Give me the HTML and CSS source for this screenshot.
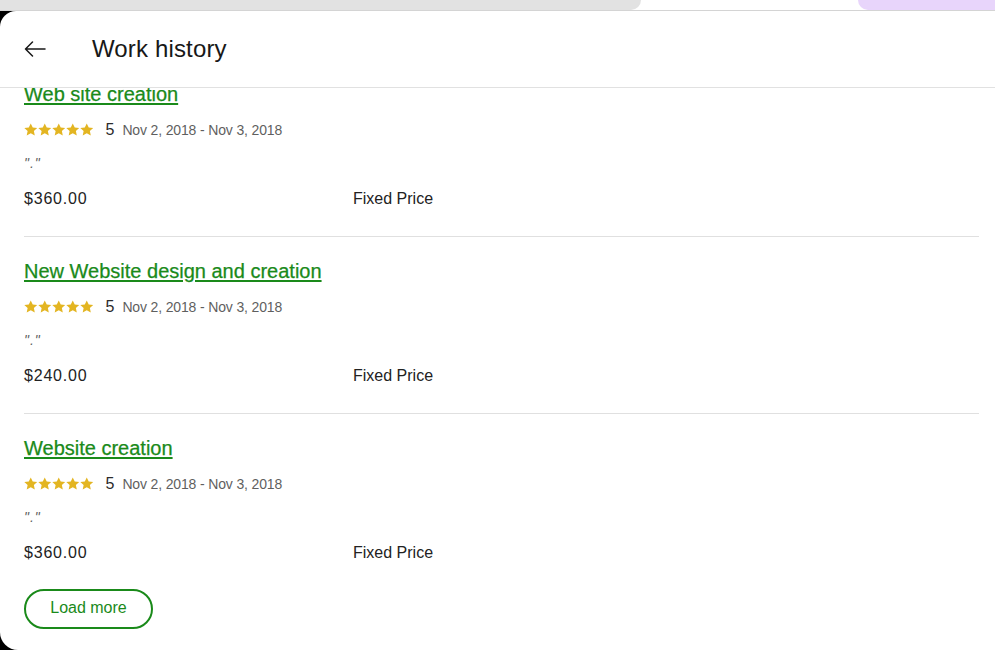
FILE: index.html
```html
<!DOCTYPE html>
<html lang="en">
<head>
<meta charset="utf-8">
<title>Work history</title>
<link rel="stylesheet" href="styles.css">
</head>
<body>
<div class="topbar">
  <div class="pill-grey"></div>
  <div class="pill-lavender"></div>
</div>
<div class="card">
  <header class="header">
    <button class="back" aria-label="Back">
      <svg width="22" height="16" viewBox="0 0 22 16"><path d="M21 8H1.5M8.5 1L1.5 8l7 7" fill="none" stroke="#181818" stroke-width="1.5" stroke-linecap="round" stroke-linejoin="round"/></svg>
    </button>
    <h1 class="title">Work history</h1>
  </header>
  <main class="content">
    <div class="list">
      <section class="item">
        <a class="job" href="#">Web site creation</a>
        <div class="meta">
          <span class="stars"><svg viewBox="0 0 13 13"><path d="M6.5.4l1.9 3.9 4.3.5-3.2 2.9.9 4.3-3.9-2.2-3.9 2.2.9-4.3L.3 4.8l4.3-.5z"/></svg><svg viewBox="0 0 13 13"><path d="M6.5.4l1.9 3.9 4.3.5-3.2 2.9.9 4.3-3.9-2.2-3.9 2.2.9-4.3L.3 4.8l4.3-.5z"/></svg><svg viewBox="0 0 13 13"><path d="M6.5.4l1.9 3.9 4.3.5-3.2 2.9.9 4.3-3.9-2.2-3.9 2.2.9-4.3L.3 4.8l4.3-.5z"/></svg><svg viewBox="0 0 13 13"><path d="M6.5.4l1.9 3.9 4.3.5-3.2 2.9.9 4.3-3.9-2.2-3.9 2.2.9-4.3L.3 4.8l4.3-.5z"/></svg><svg viewBox="0 0 13 13"><path d="M6.5.4l1.9 3.9 4.3.5-3.2 2.9.9 4.3-3.9-2.2-3.9 2.2.9-4.3L.3 4.8l4.3-.5z"/></svg></span>
          <span class="score">5</span>
          <span class="dates">Nov 2, 2018 - Nov 3, 2018</span>
        </div>
        <p class="quote">"."</p>
        <div class="row">
          <span class="price">$360.00</span>
          <span class="type">Fixed Price</span>
        </div>
      </section>
      <section class="item">
        <a class="job" href="#">New Website design and creation</a>
        <div class="meta">
          <span class="stars"><svg viewBox="0 0 13 13"><path d="M6.5.4l1.9 3.9 4.3.5-3.2 2.9.9 4.3-3.9-2.2-3.9 2.2.9-4.3L.3 4.8l4.3-.5z"/></svg><svg viewBox="0 0 13 13"><path d="M6.5.4l1.9 3.9 4.3.5-3.2 2.9.9 4.3-3.9-2.2-3.9 2.2.9-4.3L.3 4.8l4.3-.5z"/></svg><svg viewBox="0 0 13 13"><path d="M6.5.4l1.9 3.9 4.3.5-3.2 2.9.9 4.3-3.9-2.2-3.9 2.2.9-4.3L.3 4.8l4.3-.5z"/></svg><svg viewBox="0 0 13 13"><path d="M6.5.4l1.9 3.9 4.3.5-3.2 2.9.9 4.3-3.9-2.2-3.9 2.2.9-4.3L.3 4.8l4.3-.5z"/></svg><svg viewBox="0 0 13 13"><path d="M6.5.4l1.9 3.9 4.3.5-3.2 2.9.9 4.3-3.9-2.2-3.9 2.2.9-4.3L.3 4.8l4.3-.5z"/></svg></span>
          <span class="score">5</span>
          <span class="dates">Nov 2, 2018 - Nov 3, 2018</span>
        </div>
        <p class="quote">"."</p>
        <div class="row">
          <span class="price">$240.00</span>
          <span class="type">Fixed Price</span>
        </div>
      </section>
      <section class="item last">
        <a class="job" href="#">Website creation</a>
        <div class="meta">
          <span class="stars"><svg viewBox="0 0 13 13"><path d="M6.5.4l1.9 3.9 4.3.5-3.2 2.9.9 4.3-3.9-2.2-3.9 2.2.9-4.3L.3 4.8l4.3-.5z"/></svg><svg viewBox="0 0 13 13"><path d="M6.5.4l1.9 3.9 4.3.5-3.2 2.9.9 4.3-3.9-2.2-3.9 2.2.9-4.3L.3 4.8l4.3-.5z"/></svg><svg viewBox="0 0 13 13"><path d="M6.5.4l1.9 3.9 4.3.5-3.2 2.9.9 4.3-3.9-2.2-3.9 2.2.9-4.3L.3 4.8l4.3-.5z"/></svg><svg viewBox="0 0 13 13"><path d="M6.5.4l1.9 3.9 4.3.5-3.2 2.9.9 4.3-3.9-2.2-3.9 2.2.9-4.3L.3 4.8l4.3-.5z"/></svg><svg viewBox="0 0 13 13"><path d="M6.5.4l1.9 3.9 4.3.5-3.2 2.9.9 4.3-3.9-2.2-3.9 2.2.9-4.3L.3 4.8l4.3-.5z"/></svg></span>
          <span class="score">5</span>
          <span class="dates">Nov 2, 2018 - Nov 3, 2018</span>
        </div>
        <p class="quote">"."</p>
        <div class="row">
          <span class="price">$360.00</span>
          <span class="type">Fixed Price</span>
        </div>
      </section>
      <button class="load-more">Load more</button>
    </div>
  </main>
</div>
</body>
</html>
```
FILE: styles.css
```css
* { box-sizing: border-box; }

html, body {
  margin: 0;
  padding: 0;
  background: #000;
  font-family: "Liberation Sans", Arial, sans-serif;
  color: #181818;
  overflow: hidden;
}

.topbar {
  height: 11px;
  background: #fff;
  border-bottom: 1px solid #d4d4d4;
  display: flex;
  align-items: stretch;
}

.pill-grey {
  width: 641px;
  background: #e2e2e2;
  border-radius: 0 0 14px 0;
}

.pill-lavender {
  margin-left: auto;
  width: 137px;
  background: #e8d5fb;
  border-radius: 0 0 0 14px;
}

.card {
  background: #fff;
  height: 639px;
  border-radius: 16px 0 0 18px;
  display: flex;
  flex-direction: column;
  overflow: hidden;
}

.header {
  flex: none;
  height: 77px;
  border-bottom: 1px solid #e1e1e1;
  display: flex;
  align-items: center;
  padding-left: 24px;
  padding-bottom: 1px;
}

.back {
  border: 0;
  background: none;
  padding: 0;
  width: 22px;
  height: 16px;
  display: flex;
  margin-right: 46px;
}

.title {
  margin: 0;
  font-size: 24px;
  font-weight: 400;
  letter-spacing: 0.15px;
  color: #181818;
}

.content {
  flex: 1;
  overflow: hidden;
  padding: 0 16px 0 24px;
}

.list {
  margin-top: -28px;
}

.item {
  padding: 20px 0 25px;
  border-bottom: 1px solid #e0e0e0;
}

.item.last {
  border-bottom: 0;
  padding-bottom: 24px;
}

.job {
  display: block;
  width: max-content;
  font-size: 20px;
  line-height: 28px;
  color: #1a8a1a;
  text-decoration: underline;
  text-decoration-thickness: 1.5px;
  text-underline-offset: 2px;
  -webkit-text-stroke: 0.25px #1a8a1a;
}

.meta {
  margin-top: 12px;
  height: 20px;
  display: flex;
  align-items: center;
}

.stars {
  display: flex;
  gap: 0.5px;
  margin-right: 12px;
}

.stars svg {
  width: 13.5px;
  height: 13.5px;
  fill: #e3b522;
}

.score {
  font-size: 16px;
  color: #2b2b2b;
  margin-right: 8px;
}

.dates {
  font-size: 14px;
  letter-spacing: -0.15px;
  color: #5f5f5f;
}

.quote {
  margin: 13px 0 0;
  height: 20px;
  line-height: 20px;
  font-size: 14px;
  font-style: italic;
  letter-spacing: 1px;
  color: #5f5f5f;
}

.row {
  margin-top: 14px;
  height: 24px;
  line-height: 24px;
  display: flex;
  font-size: 16px;
  color: #222;
}

.price {
  width: 329px;
  letter-spacing: 0.8px;
}

.load-more {
  display: block;
  width: 129px;
  height: 40px;
  border: 2px solid #1a8a1a;
  border-radius: 20px;
  background: #fff;
  color: #1a8a1a;
  font-family: "Liberation Sans", Arial, sans-serif;
  font-size: 16px;
  padding: 0 0 3px;
}
```
